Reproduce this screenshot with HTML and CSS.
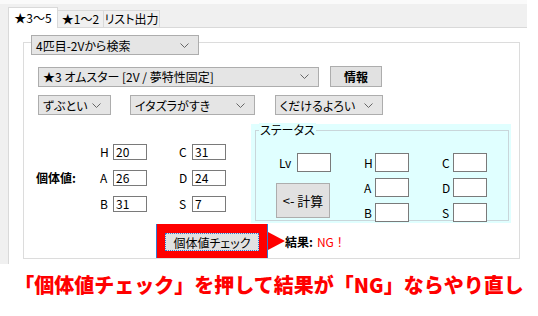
FILE: index.html
```html
<!DOCTYPE html>
<html lang="ja">
<head>
    <meta charset="UTF-8">
    <title>個体値チェック</title>
    <link rel="stylesheet" href="styles.css">
</head>
<body>
    <!-- Window -->
    <div class="window">
        <div class="tabs">
            <div class="tab tab-active">★3〜5</div>
            <div class="tab tab-b">★1〜2</div>
            <div class="tab tab-c">リスト出力</div>
        </div>

        <div class="page">
            <div class="group">
                <div class="combo combo-search">
                    <span>4匹目-2Vから検索</span>
                    <svg class="chev" width="9" height="5" viewBox="0 0 9 5"><polyline points="0.5,0.5 4.5,4.5 8.5,0.5" fill="none" stroke="#666" stroke-width="1"/></svg>
                </div>

                <div class="row row-pokemon">
                    <div class="combo combo-pokemon">
                        <span>★3 オムスター [2V / 夢特性固定]</span>
                        <svg class="chev" width="9" height="5" viewBox="0 0 9 5"><polyline points="0.5,0.5 4.5,4.5 8.5,0.5" fill="none" stroke="#666" stroke-width="1"/></svg>
                    </div>
                    <button class="btn btn-info">情報</button>
                </div>

                <div class="row row-nature">
                    <div class="combo combo-nature">
                        <span>ずぶとい</span>
                        <svg class="chev" width="9" height="5" viewBox="0 0 9 5"><polyline points="0.5,0.5 4.5,4.5 8.5,0.5" fill="none" stroke="#666" stroke-width="1"/></svg>
                    </div>
                    <div class="combo combo-trait">
                        <span>イタズラがすき</span>
                        <svg class="chev" width="9" height="5" viewBox="0 0 9 5"><polyline points="0.5,0.5 4.5,4.5 8.5,0.5" fill="none" stroke="#666" stroke-width="1"/></svg>
                    </div>
                    <div class="combo combo-ability">
                        <span>くだけるよろい</span>
                        <svg class="chev" width="9" height="5" viewBox="0 0 9 5"><polyline points="0.5,0.5 4.5,4.5 8.5,0.5" fill="none" stroke="#666" stroke-width="1"/></svg>
                    </div>
                </div>

                <div class="lower">
                    <!-- Individual values -->
                    <div class="iv">
                        <div class="iv-label">個体値:</div>
                        <div class="iv-grid">
                            <div class="pair"><span class="key">H</span><div class="box">20</div></div>
                            <div class="pair"><span class="key">C</span><div class="box">31</div></div>
                            <div class="pair"><span class="key">A</span><div class="box">26</div></div>
                            <div class="pair"><span class="key">D</span><div class="box">24</div></div>
                            <div class="pair"><span class="key">B</span><div class="box">31</div></div>
                            <div class="pair"><span class="key">S</span><div class="box">7</div></div>
                        </div>
                    </div>

                    <!-- Status -->
                    <div class="status">
                        <div class="status-frame">
                            <div class="status-title">ステータス</div>
                            <div class="status-grid">
                                <div class="pair pair-lv"><span class="key key-lv">Lv</span><div class="box box-tall"></div></div>
                                <div class="pair col2"><span class="key key-s">H</span><div class="box box-tall"></div></div>
                                <div class="pair col3"><span class="key key-s">C</span><div class="box box-tall"></div></div>
                                <button class="btn btn-calc">&lt;- 計算</button>
                                <div class="pair col2"><span class="key key-s">A</span><div class="box box-tall"></div></div>
                                <div class="pair col3"><span class="key key-s">D</span><div class="box box-tall"></div></div>
                                <div class="pair col2"><span class="key key-s">B</span><div class="box box-tall"></div></div>
                                <div class="pair col3"><span class="key key-s">S</span><div class="box box-tall"></div></div>
                            </div>
                        </div>
                    </div>
                </div>

                <div class="check-row">
                    <div class="highlight">
                        <button class="btn btn-check">個体値チェック</button>
                    </div>
                    <div class="arrow"></div>
                    <span class="result">結果:</span>
                    <span class="ng">NG！</span>
                </div>
            </div>
        </div>
    </div>

    <p class="caption">「個体値チェック」を押して結果が「NG」ならやり直し</p>
</body>
</html>
```

FILE: styles.css
```css
html, body {
  margin: 0;
  background: #fff;
}

* {
  box-sizing: border-box;
}

body {
  font-family: "Noto Sans CJK JP", "Noto Sans", sans-serif;
  font-size: 12px;
  color: #000;
}

/* Window */
.window {
  width: 527px;
  background: #f0f0f0;
  border-top: 4px solid #fafafa;
  font-feature-settings: "palt";
}

.tabs {
  display: flex;
  align-items: flex-end;
  height: 23px;
  padding-left: 8px;
}

.tab {
  height: 17px;
  line-height: 15px;
  border: 1px solid #d9d9d9;
  border-bottom: none;
  text-align: center;
  background: #f0f0f0;
  white-space: nowrap;
}

.tab-active {
  width: 50px;
  height: 21px;
  line-height: 19px;
  margin-bottom: -1px;
  background: #fff;
  position: relative;
  z-index: 1;
}

.tab-b {
  width: 47px;
  margin-left: -1px;
}

.tab-c {
  width: 57px;
  margin-left: -1px;
}

.page {
  margin-left: 8px;
  width: 519px;
  background: #fff;
  border-top: 1px solid #d9d9d9;
  border-left: 1px solid #d9d9d9;
  padding: 14px 7px 5px 14px;
}

.group {
  border: 1px solid #dcdcdc;
  padding: 0 7px 0 14px;
}

/* Combo boxes and buttons */
.combo {
  display: flex;
  align-items: center;
  justify-content: space-between;
  height: 20px;
  padding: 0 9px 0 4px;
  background: #e5e5e5;
  border: 1px solid #adadad;
  white-space: nowrap;
}

.chev {
  flex: none;
}

.combo-search {
  width: 168px;
  margin: -8px 0 0 -7px;
}

.row {
  display: flex;
  align-items: center;
}

.row-pokemon {
  margin-top: 11px;
  height: 21px;
}

.combo-pokemon {
  width: 281px;
}

.btn {
  font-family: inherit;
  font-size: 12px;
  font-feature-settings: "palt";
  color: #000;
  background: #e1e1e1;
  border: 1px solid #adadad;
  padding: 0;
}

.btn-info {
  width: 52px;
  height: 21px;
  margin-left: 11px;
  font-weight: bold;
}

.row-nature {
  margin-top: 8px;
}

.combo-nature {
  width: 73px;
}

.combo-trait {
  width: 125px;
  margin-left: 19px;
}

.combo-ability {
  width: 108px;
  margin-left: 20px;
}

/* Lower area */
.lower {
  display: flex;
  margin-top: 9px;
}

.iv {
  width: 213px;
  display: flex;
  align-items: center;
  align-self: flex-start;
  padding-top: 19px;
}

.iv-label {
  width: 64px;
  margin-left: -2px;
  font-weight: bold;
}

.iv-grid {
  display: grid;
  grid-template-columns: 47px 47px;
  column-gap: 32px;
  row-gap: 9px;
}

.pair {
  display: flex;
  align-items: center;
}

.key {
  width: 13px;
}

.box {
  width: 34px;
  height: 16px;
  line-height: 14px;
  padding-left: 2px;
  background: #fff;
  border: 1px solid #7a7a7a;
}

.box-tall {
  height: 19px;
}

.status {
  width: 260px;
  height: 99px;
  background: #e0ffff;
  padding: 6px 2px 2px 4px;
}

.status-frame {
  height: 100%;
  border: 1px solid #c9d6da;
}

.status-title {
  display: inline-block;
  margin: -8px 0 0 3px;
  padding: 0 1px;
  height: 14px;
  line-height: 14px;
  background: #e0ffff;
  vertical-align: top;
}

.status-grid {
  display: grid;
  grid-template-columns: 55px 45px 45px;
  grid-template-rows: 19px 19px 19px;
  column-gap: 33px;
  row-gap: 6px;
  margin: 5px 0 0 20px;
}

.col2 {
  grid-column: 2;
}

.col3 {
  grid-column: 3;
}

.key-lv {
  width: 21px;
  padding-left: 3px;
}

.key-s {
  width: 11px;
}

.btn-calc {
  grid-column: 1;
  grid-row: 2 / span 2;
  align-self: center;
  width: 54px;
  height: 35px;
  font-size: 13px;
}

/* Check row */
.check-row {
  display: flex;
  align-items: center;
  margin: 1px 0 0 119px;
}

.highlight {
  border: 8px solid #f00;
  border-top-width: 9px;
  border-bottom-width: 7px;
  box-shadow: -1px 0 0 #2f79d4, 1px 0 0 #2f79d4;
}

.btn-check {
  display: block;
  width: 94px;
  height: 18px;
  border: 1px dotted #2f79d4;
  background: #e1e1e1;
}

.arrow {
  width: 0;
  height: 0;
  margin-left: 1px;
  border-left: 17px solid #f00;
  border-top: 9px solid transparent;
  border-bottom: 9px solid transparent;
}

.result {
  font-weight: bold;
}

.ng {
  color: #f00;
  margin-left: 4px;
  font-feature-settings: normal;
}

/* Caption */
.caption {
  margin: 9px 0 0;
  font-size: 20px;
  line-height: 24px;
  font-weight: 900;
  color: #f00;
  text-align: center;
  white-space: nowrap;
}
```
